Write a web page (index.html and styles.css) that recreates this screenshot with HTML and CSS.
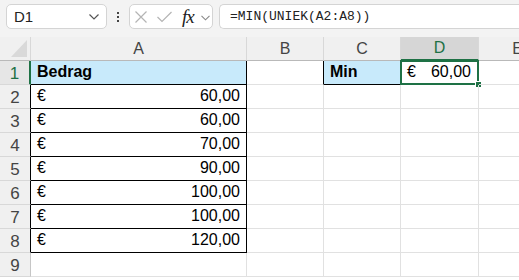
FILE: index.html
```
<!doctype html>
<html>
<head>
<title>MIN UNIEK</title>
<link rel="stylesheet" href="styles.css">
</head>
<body>
<div class="bar">
  <div class="namebox">
    <span>D1</span>
    <svg width="12" height="8" viewBox="0 0 12 8"><path d="M1.5 1.5 L6 6 L10.5 1.5" fill="none" stroke="#555" stroke-width="1.2"/></svg>
  </div>
  <div class="dots"><i></i><i></i><i></i></div>
  <div class="fxbox">
    <svg class="ic-x" width="12" height="12" viewBox="0 0 12 12"><path d="M0.5 0.5 L11.5 11.5 M11.5 0.5 L0.5 11.5" stroke="#b4b4b4" stroke-width="1.2"/></svg>
    <svg class="ic-ok" width="15" height="12" viewBox="0 0 15 12"><path d="M0.5 6 L5 10.5 L14.5 1" fill="none" stroke="#b4b4b4" stroke-width="1.2"/></svg>
    <span class="fx">fx</span>
    <svg class="ic-dd" width="9" height="6" viewBox="0 0 9 6"><path d="M0.5 0.8 L4.5 4.8 L8.5 0.8" fill="none" stroke="#888" stroke-width="1.1"/></svg>
  </div>
  <div class="formula">=MIN(UNIEK(A2:A8))</div>
</div>

<div class="sheet">
  <div class="hd corner"><span class="tri"></span></div>
  <div class="hd col">A</div>
  <div class="hd col">B</div>
  <div class="hd col">C</div>
  <div class="hd col sel">D</div>
  <div class="hd col">E</div>

  <div class="hd row rsel">1</div>
  <div class="c box head">Bedrag</div>
  <div class="c edge"></div>
  <div class="c box head">Min</div>
  <div class="c active"><span>€</span><span>60,00</span><i class="handle"></i></div>
  <div class="c"></div>

  <div class="hd row blk">2</div>
  <div class="c box"><span>€</span><span>60,00</span></div>
  <div class="c"></div><div class="c"></div><div class="c"></div><div class="c"></div>

  <div class="hd row blk">3</div>
  <div class="c box"><span>€</span><span>60,00</span></div>
  <div class="c"></div><div class="c"></div><div class="c"></div><div class="c"></div>

  <div class="hd row blk">4</div>
  <div class="c box"><span>€</span><span>70,00</span></div>
  <div class="c"></div><div class="c"></div><div class="c"></div><div class="c"></div>

  <div class="hd row blk">5</div>
  <div class="c box"><span>€</span><span>90,00</span></div>
  <div class="c"></div><div class="c"></div><div class="c"></div><div class="c"></div>

  <div class="hd row blk">6</div>
  <div class="c box"><span>€</span><span>100,00</span></div>
  <div class="c"></div><div class="c"></div><div class="c"></div><div class="c"></div>

  <div class="hd row blk">7</div>
  <div class="c box"><span>€</span><span>100,00</span></div>
  <div class="c"></div><div class="c"></div><div class="c"></div><div class="c"></div>

  <div class="hd row blk">8</div>
  <div class="c box"><span>€</span><span>120,00</span></div>
  <div class="c"></div><div class="c"></div><div class="c"></div><div class="c"></div>

  <div class="hd row">9</div>
  <div class="c"></div><div class="c"></div><div class="c"></div><div class="c"></div><div class="c"></div>
</div>
</body>
</html>
```

FILE: styles.css
```
body{
margin:0;
background:#fff;
font-family:"Liberation Sans",Arial,sans-serif;
color:#000;
overflow:hidden;
}
.bar{
height:37px;
background:#f3f3f3;
display:flex;
align-items:flex-start;
padding-top:4px;
box-sizing:border-box;
}
.namebox{
margin-left:6px;
width:101px;
height:25px;
box-sizing:border-box;
background:#fff;
border:1px solid #d4d4d4;
border-radius:5px;
display:flex;
align-items:center;
justify-content:space-between;
padding:0 6px 0 7px;
font-size:15px;
color:#222;
}
.dots{
width:22px;
height:25px;
display:flex;
flex-direction:column;
align-items:center;
justify-content:center;
gap:2px;
}
.dots i{
width:2px;
height:2px;
background:#444;
}
.fxbox{
width:84px;
height:25px;
box-sizing:border-box;
background:#fff;
border:1px solid #d4d4d4;
border-radius:5px;
display:flex;
align-items:center;
padding-left:5px;
}
.ic-ok{
margin-left:10px;
}
.fx{
font-family:"Liberation Serif",serif;
font-style:italic;
font-size:19px;
line-height:20px;
color:#222;
margin-left:10px;
width:15px;
letter-spacing:-1px;
}
.ic-dd{
margin-left:4px;
margin-top:2px;
}
.formula{
margin-left:6px;
flex:1;
height:25px;
box-sizing:border-box;
background:#fff;
border:1px solid #d4d4d4;
border-right:none;
border-radius:5px 0 0 5px;
font-family:"Liberation Mono",monospace;
font-size:13px;
line-height:23px;
padding-left:10px;
color:#222;
}
.sheet{
display:grid;
grid-template-columns:31px 216px 77px 77px 78px 78px;
grid-auto-rows:24px;
}
.hd{
background:#f0f0f0;
color:#444;
font-size:16px;
box-sizing:border-box;
display:flex;
align-items:center;
justify-content:center;
}
.col{
border-right:1px solid #d8d8d8;
border-bottom:1px solid #b9b9b9;
}
.col.sel{
background:#d6d6d6;
color:#1e7145;
border-bottom:2px solid #1e7145;
}
.corner{
border-right:1px solid #d8d8d8;
border-bottom:1px solid #b9b9b9;
justify-content:flex-end;
align-items:flex-end;
padding:0 3px 3px 0;
}
.tri{
width:16px;
height:17px;
background:#d9d9d9;
clip-path:polygon(100% 0,100% 100%,0 100%);
}
.row{
border-right:1px solid #c6c6c6;
border-bottom:1px solid #d8d8d8;
font-size:17px;
padding-top:2px;
}
.row.rsel{
color:#1e7145;
background:#e6e6e6;
border-right:2px solid #1e7145;
}
.row.blk{
border-right-color:#000;
}
.c{
position:relative;
box-sizing:border-box;
border-right:1px solid #e1e1e1;
border-bottom:1px solid #e1e1e1;
font-size:16px;
display:flex;
align-items:flex-end;
justify-content:space-between;
padding:0 6px 3px 6px;
}
.c.box{
border-right-color:#000;
border-bottom-color:#000;
}
.c.head{
background:#c8eafb;
font-weight:bold;
}
.c.edge{
border-right-color:#000;
}
.c.active{
padding:0 7px 3px 6px;
}
.c.active::before{
content:"";
position:absolute;
left:-1px;
top:-1px;
right:-1px;
bottom:-1px;
border:2px solid #1e7145;
}
.handle{
position:absolute;
right:-4px;
bottom:-4px;
width:5px;
height:5px;
background:#1e7145;
border:1px solid #fff;
}
```
